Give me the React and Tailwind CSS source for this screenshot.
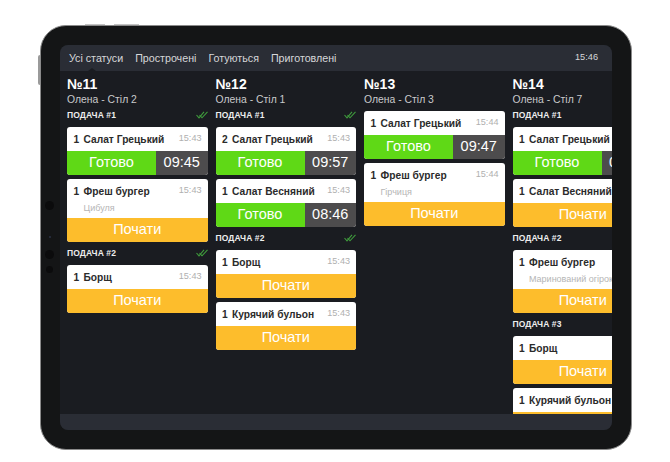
import React from 'react';

const tabs = ['Усі статуси', 'Прострочені', 'Готуються', 'Приготовлені'];

const orders = [
  {
    id: '№11',
    sub: 'Олена - Стіл 2',
    courses: [
      {
        title: 'ПОДАЧА #1',
        done: true,
        items: [
          { qty: 1, name: 'Салат Грецький', time: '15:43', timer: '09:45' },
          { qty: 1, name: 'Фреш бургер', time: '15:43', note: 'Цибуля' },
        ],
      },
      { title: 'ПОДАЧА #2', done: true, items: [{ qty: 1, name: 'Борщ', time: '15:43' }] },
    ],
  },
  {
    id: '№12',
    sub: 'Олена - Стіл 1',
    courses: [
      {
        title: 'ПОДАЧА #1',
        done: true,
        items: [
          { qty: 2, name: 'Салат Грецький', time: '15:43', timer: '09:57' },
          { qty: 1, name: 'Салат Весняний', time: '15:43', timer: '08:46' },
        ],
      },
      {
        title: 'ПОДАЧА #2',
        done: true,
        items: [
          { qty: 1, name: 'Борщ', time: '15:43' },
          { qty: 1, name: 'Курячий бульон', time: '15:43' },
        ],
      },
    ],
  },
  {
    id: '№13',
    sub: 'Олена - Стіл 3',
    courses: [
      {
        items: [
          { qty: 1, name: 'Салат Грецький', time: '15:44', timer: '09:47' },
          { qty: 1, name: 'Фреш бургер', time: '15:44', note: 'Гірчиця' },
        ],
      },
    ],
  },
  {
    id: '№14',
    sub: 'Олена - Стіл 7',
    courses: [
      {
        title: 'ПОДАЧА #1',
        items: [
          { qty: 1, name: 'Салат Грецький', timer: '09:47' },
          { qty: 1, name: 'Салат Весняний' },
        ],
      },
      {
        title: 'ПОДАЧА #2',
        items: [{ qty: 1, name: 'Фреш бургер', note: 'Маринований огірок' }],
      },
      {
        title: 'ПОДАЧА #3',
        items: [
          { qty: 1, name: 'Борщ' },
          { qty: 1, name: 'Курячий бульон' },
        ],
      },
    ],
  },
];

function DoubleCheck() {
  return (
    <svg width="12" height="8" viewBox="0 0 12 8" fill="none" stroke="#3f9b3c" strokeWidth="1.1">
      <path d="M0.5 4 L3 6.8 L8 0.8" />
      <path d="M3.5 4 L6 6.8 L11.5 0.8" />
    </svg>
  );
}

function Card({ item }) {
  return (
    <div className="rounded-[3px] overflow-hidden bg-white">
      <div className="flex justify-between pl-[6.5px] pr-[6px] pt-[6px] h-[24px]">
        <div className="flex text-[10.2px] leading-[13px] font-bold tracking-[0.02px] text-[#2b2b2b] whitespace-nowrap">
          <span className="w-[10px] shrink-0">{item.qty}</span>
          <span>{item.name}</span>
        </div>
        {item.time && (
          <span className="-mt-[1px] pl-1 text-[9.1px] leading-[12px] text-[#b0b0b0] shrink-0">{item.time}</span>
        )}
      </div>
      {item.note && (
        <div className="h-[15.4px] pl-[16.5px] text-[9px] leading-[10px] text-[#b5b5b5] whitespace-nowrap">
          {item.note}
        </div>
      )}
      {item.timer ? (
        <div className="flex h-[24px] text-[14.5px] leading-[23px] text-white">
          <div className="flex-1 bg-[#5fd916] text-center">Готово</div>
          <div className="w-[51.5px] bg-[#4d4c4d] text-center">{item.timer}</div>
        </div>
      ) : (
        <div className="h-[24px] bg-[#fdbd2c] text-center text-[14.5px] leading-[23px] text-white">
          Почати
        </div>
      )}
    </div>
  );
}

function Order({ order }) {
  return (
    <div className="w-[140.5px] shrink-0">
      <div className="text-[14px] leading-[16px] font-bold text-white">{order.id}</div>
      <div className="text-[10.4px] leading-[15px] text-[#c9cacc]">{order.sub}</div>
      {order.courses.map((course, i) => (
        <div key={i}>
          {course.title ? (
            <div className={`flex items-center justify-between h-[16px] mb-[3.5px] ${i === 0 ? 'mt-0' : 'mt-[3.5px]'}`}>
              <span className="text-[8.5px] font-bold tracking-[0.1px] text-[#eeeeee]">{course.title}</span>
              {course.done && <DoubleCheck />}
            </div>
          ) : (
            <div className="h-[4px]" />
          )}
          <div className="flex flex-col gap-[4px]">
            {course.items.map((item, j) => (
              <Card key={j} item={item} />
            ))}
          </div>
        </div>
      ))}
    </div>
  );
}

export default function App() {
  return (
    <div className="w-[670px] h-[462px] bg-white pt-[25px] pl-[40px] font-['Liberation_Sans',Arial,sans-serif] overflow-hidden">
      <div className="relative w-[592px] h-[425px] p-[19px] rounded-[26px] bg-[#141516] border border-[#8a8a8a]">
        {/* hardware buttons and sensors */}
        <div className="absolute -top-[2px] left-[44px] w-[20px] h-[1px] bg-[#c4c4c4]" />
        <div className="absolute -top-[2px] left-[73px] w-[25px] h-[1px] bg-[#c4c4c4]" />
        <div className="absolute -left-[3px] top-[29px] w-[2px] h-[30px] rounded-l bg-[#9a9a9a]" />
        <div className="absolute left-[4px] top-[175px] w-[9px] h-[9px] rounded-full bg-[#0b0b0c]" />
        <div className="absolute left-[8px] top-[210px] w-[2px] h-[2px] rounded-full bg-[#2a3145]" />
        <div className="absolute left-[4px] top-[224px] w-[9px] h-[9px] rounded-full bg-[#0b0b0c]" />
        <div className="absolute left-[5px] top-[240px] w-[7px] h-[7px] rounded-full bg-[#0b0b0c]" />

        <div className="flex flex-col w-[552px] h-[385px] rounded-[8px] overflow-hidden bg-[#1a1c21]">
          <div className="relative flex items-center justify-between h-[26px] shrink-0 pl-[9px] pr-[14px] bg-[#2a2d35]">
            <div className="flex gap-[12px]">
              {tabs.map((t) => (
                <span key={t} className="text-[10.7px] text-[#d6d7d9] whitespace-nowrap">{t}</span>
              ))}
            </div>
            <span className="text-[9.2px] text-[#d6d7d9]">15:46</span>
            <div className="absolute bottom-0 left-[28px] w-0 h-0 border-x-[4px] border-x-transparent border-b-[3px] border-b-[#1a1c21]" />
          </div>
          <div className="flex-1 min-h-0 flex gap-[8px] pl-[7px] pt-[5px] overflow-hidden">
            {orders.map((o) => (
              <Order key={o.id} order={o} />
            ))}
          </div>
          <div className="h-[16px] shrink-0 bg-[#2a2d35]" />
        </div>
      </div>
    </div>
  );
}
